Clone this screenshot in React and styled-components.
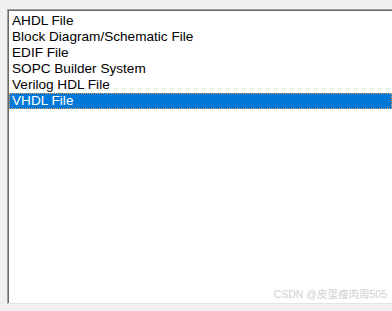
import React from "react";
import styled, { createGlobalStyle } from "styled-components";

const Global = createGlobalStyle`
  html, body { margin: 0; padding: 0; background: #f0f0f0; }
  body { width: 392px; height: 311px; overflow: hidden; font-family: "Liberation Sans", Arial, sans-serif; }
`;

const Page = styled.div`
  position: relative;
  width: 392px;
  height: 311px;
  box-sizing: border-box;
  padding: 9px 0 7px 7px;
  background: #f0f0f0;
`;

const ListBox = styled.div`
  box-sizing: border-box;
  height: 295px;
  background: #fff;
  border-top: 1px solid #a0a0a0;
  border-left: 1px solid #a0a0a0;
  border-bottom: 1px solid #e3e3e3;
  box-shadow: inset 1px 1px 0 #696969;
  padding: 3px 0 0 1px;
  display: flex;
  flex-direction: column;
`;

const Item = styled.div`
  height: 16px;
  line-height: 16px;
  font-size: 13.6px;
  padding-left: 3px;
  white-space: nowrap;
  color: ${(p) => (p.$selected ? "#fff" : "#000")};
  background: ${(p) => (p.$selected ? "#0078d7" : "transparent")};
  outline: ${(p) => (p.$selected ? "1px dotted #e8a060" : "none")};
  outline-offset: -1px;
`;

const Watermark = styled.div`
  position: absolute;
  right: 5px;
  bottom: 10px;
  font-size: 10.5px;
  color: #d0d0d0;
  font-family: "Liberation Sans", "Noto Sans CJK SC", sans-serif;
  white-space: nowrap;
`;

const items = [
  "AHDL File",
  "Block Diagram/Schematic File",
  "EDIF File",
  "SOPC Builder System",
  "Verilog HDL File",
  "VHDL File",
];

export default function App() {
  return (
    <>
      <Global />
      <Page>
        <ListBox>
          {items.map((t, i) => (
            <Item key={t} $selected={i === 5}>
              {t}
            </Item>
          ))}
        </ListBox>
        <Watermark>CSDN @皮蛋瘦肉周505</Watermark>
      </Page>
    </>
  );
}
